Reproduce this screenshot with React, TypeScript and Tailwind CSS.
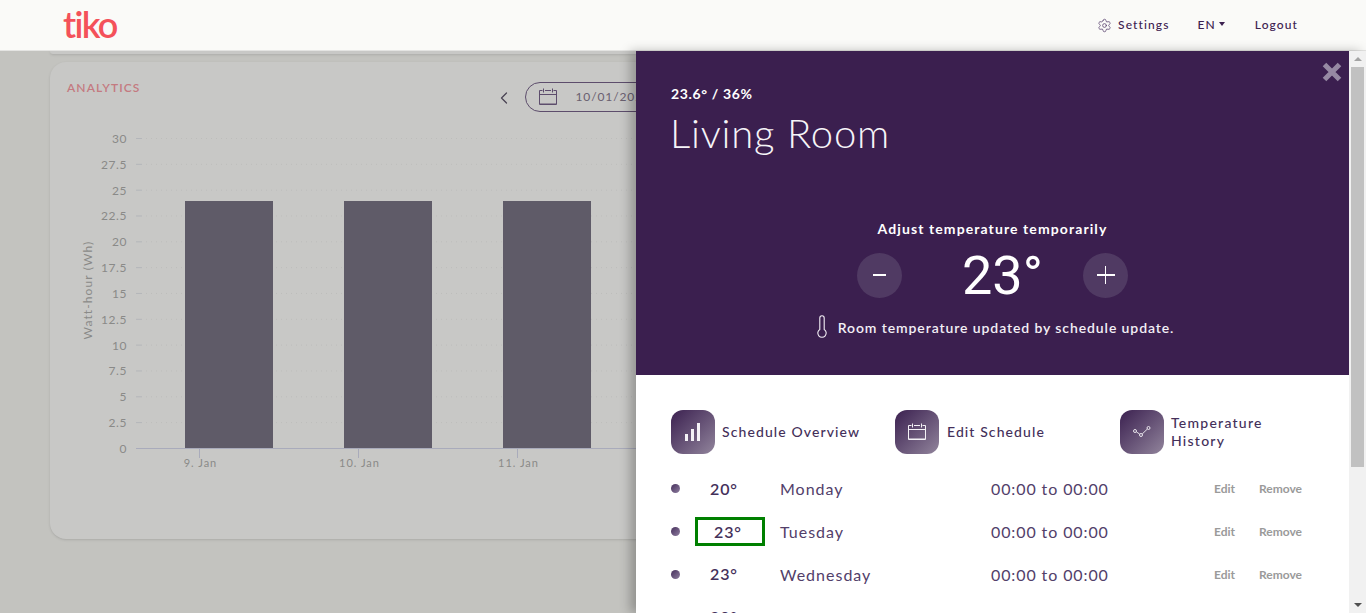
import React from "react";
import { ChevronLeft, Settings } from "lucide-react";

const yLabels = ["30","27.5","25","22.5","20","17.5","15","12.5","10","7.5","5","2.5","0"];

function Chart() {
  const bars = [185, 344, 503];
  return (
    <svg width="586" height="370" viewBox="50 120 586 370" className="block shrink-0" style={{ fontFamily: "Lato, sans-serif" }}>
      {yLabels.map((l, i) => {
        const y = 138.5 + i * 25.83;
        return (
          <g key={l}>
            <text x="127" y={y + 4.5} textAnchor="end" fontSize="12" letterSpacing="0.6" fill="#8a8a88">{l}</text>
            {i < 12 && <line x1="136" x2="142" y1={y} y2={y} stroke="#b4b6ba" />}
            {i < 12 && <line x1="146" x2="636" y1={y} y2={y} stroke="#bdbdbb" strokeDasharray="1 4" />}
          </g>
        );
      })}
      <line x1="136" x2="636" y1="448.5" y2="448.5" stroke="#a9abbb" />
      <text transform="translate(92 290) rotate(-90)" textAnchor="middle" fontSize="12" letterSpacing="1.1" fill="#8a8a88">Watt-hour (Wh)</text>
      {bars.map((x, i) => (
        <g key={x}>
          <rect x={x} y="201" width="88" height="247" fill="#5f5b68" />
          <line x1={x + 14.5} x2={x + 14.5} y1="449" y2="458" stroke="#a9abbb" />
          <text x={x + 15.5} y="467" textAnchor="middle" fontSize="11" letterSpacing="1" fill="#8a8a88">{["9. Jan","10. Jan","11. Jan"][i]}</text>
        </g>
      ))}
    </svg>
  );
}

function CalendarIcon({ color, size = 20 }: { color: string; size?: number }) {
  return (
    <svg width={size} height={size} viewBox="0 0 20 20" fill="none" stroke={color} strokeWidth="1">
      <path d="M1.5 3.5h3M7 3.5h6M15.5 3.5h3M1.5 3.5v14h17v-14M1.5 7.5h17M5.5 1.5v4M14.5 1.5v4M8.5 3.5h3" />
      <path d="M1.5 16.5h17" opacity="0.5" />
    </svg>
  );
}

function Tile({ children }: { children: React.ReactNode }) {
  return (
    <div className="w-11 h-11 shrink-0 rounded-xl bg-gradient-to-br from-[#3c2150] to-[#92859c] flex items-center justify-center">
      {children}
    </div>
  );
}

const rows = [
  { t: "20°", d: "Monday" },
  { t: "23°", d: "Tuesday", outlined: true },
  { t: "23°", d: "Wednesday" },
  { t: "20°", d: "Thursday" },
];

function Row({ t, d, outlined }: { t: string; d: string; outlined?: boolean }) {
  return (
    <div className="flex items-center h-[42.8px] shrink-0">
      <div className="w-[9px] h-[9px] rounded-full bg-gradient-to-br from-[#47305c] to-[#8f7fa0] mr-[15px] -mt-[1px]" />
      <div className={outlined
        ? "w-[70px] h-[29px] -mt-[1px] border-[3px] border-[#008000] pl-4 flex items-center text-[16px] font-semibold tracking-[0.9px] text-[#44305a]"
        : "w-[70px] h-[29px] -mt-[1px] pl-[15px] flex items-center text-[16px] font-semibold tracking-[0.9px] text-[#44305a]"}>{t}</div>
      <div className="w-[226px] pl-[15px] text-[16px] tracking-[1px] text-[#52406a]">{d}</div>
      <div className="w-[223px] text-[16px] tracking-[0.9px] text-[#52406a]">00:00 to 00:00</div>
      <div className="w-[45px] text-[12px] font-bold text-[#9a9a9a]">Edit</div>
      <div className="text-[12px] font-bold text-[#9a9a9a]">Remove</div>
    </div>
  );
}

export default function App() {
  return (
    <div className="h-[613px] w-[1366px] overflow-hidden flex flex-col bg-[#c3c3bf]" style={{ fontFamily: "Lato, sans-serif" }}>
      <header className="h-[51px] shrink-0 bg-[#fafaf8] border-b border-[#e4e4e2] flex items-center pl-[63px] pr-[68px]">
        <div className="text-[36px] leading-none font-semibold tracking-[-1.7px] text-[#f4515a] -mt-[3px]">tiko</div>
        <nav className="ml-auto flex items-center text-[#3c2150] text-xs font-medium tracking-[1.1px]">
          <Settings size={15} strokeWidth={1.25} className="text-[#5a4270] mr-[6px]" />
          <span>Settings</span>
          <span className="ml-[28px]">EN</span>
          <span className="ml-[3px] -mt-[3px] w-0 h-0 border-x-[3.5px] border-x-transparent border-t-[4px] border-t-[#3c2150]" />
          <span className="ml-[30px]">Logout</span>
        </nav>
      </header>

      <main className="flex-1 flex min-h-0">
        <section className="w-[636px] shrink-0 overflow-hidden pl-[50px] flex flex-col">
          <div className="h-[3px] w-[700px] shrink-0 bg-[#c8c8c6] rounded-b-2xl shadow-sm" />
          <div className="mt-2 w-[700px] h-[477px] shrink-0 rounded-2xl bg-[#c8c8c6] shadow-sm flex flex-col">
            <div className="h-[58px] shrink-0 relative flex">
              <div className="ml-[17px] mt-[18px] text-xs font-semibold tracking-[1.1px] text-[#c47a80]">ANALYTICS</div>
              <div className="ml-[356px] mt-[19px] flex items-start">
                <ChevronLeft size={20} strokeWidth={1.5} className="text-[#4a4454] mt-[7px] -ml-[2px]" />
                <div className="ml-[11px] h-[30px] w-[200px] rounded-full border border-[#5d4d6c] flex items-center pl-[12px] text-xs tracking-[0.9px] text-[#6a6070] mt-[1px]">
                  <CalendarIcon color="#5d4d6c" />
                  <span className="ml-[17px]">10/01/2022</span>
                </div>
              </div>
            </div>
            <Chart />
          </div>
        </section>

        <section className="flex-1 min-w-0 flex flex-col bg-white shadow-[-6px_0_10px_rgba(0,0,0,0.25)] z-10 relative overflow-hidden">
          <div className="h-[324px] shrink-0 bg-[#3b1f4f] text-white pl-[35px] pr-[17px] relative flex flex-col">
            <svg width="20" height="20" viewBox="0 0 20 20" className="absolute right-[24px] top-[11px]" stroke="#9689a3" strokeWidth="5">
              <path d="M2.5 2.5l15 15M17.5 2.5l-15 15" />
            </svg>
            <div className="mt-[34px] text-[14px] leading-[18px] font-bold tracking-[0.65px]">23.6° / 36%</div>
            <h1 className="mt-[5px] -ml-px text-[40px] leading-[50px] font-light tracking-[0.8px] text-[#f6f4f8]">Living Room</h1>
            <div className="mt-[61px] -ml-[35px] flex flex-col items-center">
              <div className="text-[14px] leading-5 font-bold tracking-[1.1px]">Adjust temperature temporarily</div>
              <div className="mt-[13px] flex items-center gap-[50px] h-[46px]">
                <div className="w-[45px] h-[45px] rounded-full bg-[#503a63] flex items-center justify-center">
                  <span className="w-[13px] h-[1.5px] bg-white" />
                </div>
                <div className="w-[81px] pl-[10px] pt-[2px] text-[54px] leading-none whitespace-nowrap" style={{ fontFamily: "Roboto, sans-serif" }}>23°</div>
                <div className="w-[45px] h-[45px] rounded-full bg-[#503a63] flex items-center justify-center relative">
                  <span className="w-[18px] h-[1.5px] bg-white" />
                  <span className="absolute w-[1.5px] h-[18px] bg-white" />
                </div>
              </div>
              <div className="mt-[17px] pl-[6px] flex items-center text-[14px] font-semibold tracking-[0.9px] text-[#f3eff6]">
                <svg width="12" height="24" viewBox="0 0 12 24" fill="none" stroke="#f3eff6" strokeWidth="1.1" className="mr-[10px] -ml-[1px]">
                  <path d="M3.8 14.5V3a2.2 2.2 0 0 1 4.4 0v11.5a4.2 4.2 0 1 1-4.4 0Z" />
                </svg>
                Room temperature updated by schedule update.
              </div>
            </div>
          </div>

          <div className="flex-1 min-h-0 pl-[35px] pr-[30px] flex flex-col">
            <div className="mt-[35px] flex items-center h-11 shrink-0 text-[14px] tracking-[1.1px] text-[#44305a] font-medium">
              <div className="w-[224px] flex items-center gap-[7px]">
                <Tile>
                  <svg width="18" height="20" viewBox="0 0 18 20" fill="#f4f2f6"><rect x="1" y="12" width="3" height="7"/><rect x="7" y="7" width="3" height="12"/><rect x="13" y="1" width="3" height="18"/></svg>
                </Tile>
                <span className="-mt-[2px]">Schedule Overview</span>
              </div>
              <div className="w-[225px] flex items-center gap-[8px]">
                <Tile><CalendarIcon color="#f4f2f6" /></Tile>
                <span className="-mt-[2px]">Edit Schedule</span>
              </div>
              <div className="flex items-center gap-[7px] leading-[18px] tracking-[1.25px]">
                <Tile>
                  <svg width="18" height="12" viewBox="0 0 18 12" fill="none" stroke="#f4f2f6" strokeWidth="0.9"><circle cx="2" cy="5" r="1.5"/><circle cx="8" cy="9" r="1.5"/><circle cx="15.5" cy="2" r="1.5"/><path d="M3.4 5.9l3.3 2.2M9.2 8l5.2-5"/></svg>
                </Tile>
                <span>Temperature<br />History</span>
              </div>
            </div>
            <div className="mt-[14px] flex flex-col">
              {rows.map((r) => <Row key={r.d} {...r} />)}
            </div>
          </div>

          <div className="absolute right-0 top-0 bottom-0 w-[17px] bg-[#f1f1f1] flex flex-col items-center">
            <span className="mt-[6px] w-0 h-0 border-x-[4px] border-x-transparent border-b-[4px] border-b-[#a3a3a3]" />
            <div className="mt-[6px] w-[13px] h-[400px] bg-[#c1c1c1]" />
            <span className="mt-auto mb-[6px] w-0 h-0 border-x-[4px] border-x-transparent border-t-[4px] border-t-[#505050]" />
          </div>
        </section>
      </main>
    </div>
  );
}
